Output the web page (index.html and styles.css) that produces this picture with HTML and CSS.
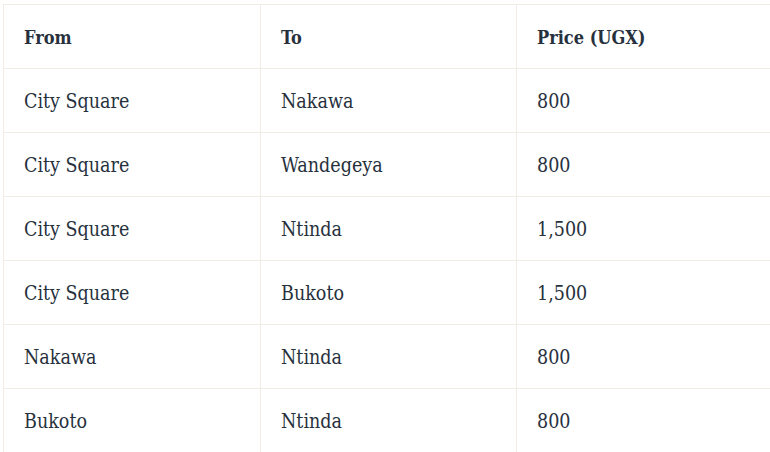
FILE: index.html
```html
<!DOCTYPE html>
<html>
<head>
<meta charset="utf-8">
<link rel="stylesheet" href="styles.css">
</head>
<body>
<table class="fares">
  <colgroup><col class="c1"><col class="c2"><col class="c3"></colgroup>
  <thead>
    <tr><th>From</th><th>To</th><th>Price (UGX)</th></tr>
  </thead>
  <tbody>
    <tr><td>City Square</td><td>Nakawa</td><td>800</td></tr>
    <tr><td>City Square</td><td>Wandegeya</td><td>800</td></tr>
    <tr><td>City Square</td><td>Ntinda</td><td>1,500</td></tr>
    <tr><td>City Square</td><td>Bukoto</td><td>1,500</td></tr>
    <tr><td>Nakawa</td><td>Ntinda</td><td>800</td></tr>
    <tr><td>Bukoto</td><td>Ntinda</td><td>800</td></tr>
  </tbody>
</table>
</body>
</html>
```
FILE: styles.css
```css
html, body {
  margin: 0;
  padding: 0;
  background: #ffffff;
  overflow: hidden;
}
body {
  padding: 4px 0 0 3px;
  font-family: "DejaVu Serif Condensed", "DejaVu Serif", "Liberation Serif", serif;
  font-stretch: condensed;
  color: #27313d;
}
.fares {
  border-collapse: collapse;
  table-layout: fixed;
  width: 770px;
}
.c1 { width: 257px; }
.c2 { width: 256px; }
.c3 { width: 257px; }
.fares th,
.fares td {
  border: 1px solid #f1ece6;
  height: 61px;
  padding: 2px 20px 0;
  text-align: left;
  vertical-align: middle;
  font-size: 19.5px;
  white-space: nowrap;
}
.fares th {
  font-weight: bold;
  font-size: 18px;
}
```
